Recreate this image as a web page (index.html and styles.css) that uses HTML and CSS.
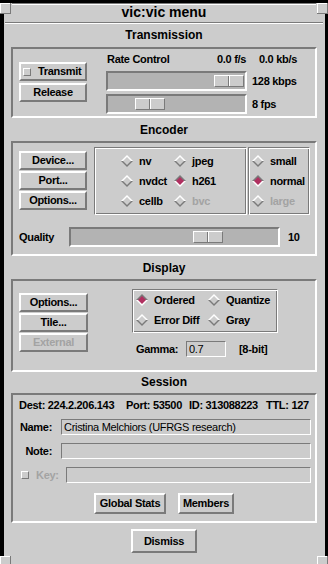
FILE: index.html
```html
<!DOCTYPE html>
<html lang="en">
<head>
    <meta charset="UTF-8">
    <meta name="viewport" content="width=device-width, initial-scale=1.0">
    <title>vic:vic menu</title>
    <link rel="stylesheet" href="styles.css">
</head>
<body>
    <div class="window">
        <!-- window manager corner handles -->
        <span class="corner corner-tl"></span>
        <span class="corner corner-tr"></span>
        <span class="corner corner-bl"></span>
        <span class="corner corner-br"></span>

        <div class="titlebar">vic:vic menu</div>
        <div class="separator"></div>

        <div class="panel">
            <!-- Transmission -->
            <div class="sect-title first">Transmission</div>
            <div class="frame trans-frame">
                <div class="btn-col trans-btns">
                    <button class="btn check-btn"><span class="check"></span>Transmit</button>
                    <button class="btn">Release</button>
                </div>
                <div class="rate">
                    <div class="rate-head">
                        <span class="rate-label">Rate Control</span>
                        <span class="rate-fps">0.0 f/s</span>
                        <span>0.0 kb/s</span>
                    </div>
                    <div class="scale-row">
                        <div class="scale rate-scale"><div class="thumb" style="margin-left: 106px"></div></div>
                        <span class="scale-value">128 kbps</span>
                    </div>
                    <div class="scale-row">
                        <div class="scale rate-scale"><div class="thumb" style="margin-left: 27px"></div></div>
                        <span class="scale-value">8 fps</span>
                    </div>
                </div>
            </div>

            <!-- Encoder -->
            <div class="sect-title">Encoder</div>
            <div class="frame enc-frame">
                <div class="enc-top">
                    <div class="btn-col enc-btns">
                        <button class="btn">Device...</button>
                        <button class="btn">Port...</button>
                        <button class="btn">Options...</button>
                    </div>
                    <div class="radio-box codec-box">
                        <label class="radio"><svg class="diamond" viewBox="0 0 12 12"><polygon class="d-top" points="0,6 6,0 12,6"/><polygon class="d-bot" points="0,6 12,6 6,12"/><polygon class="d-in" points="2,6 6,2 10,6 6,10"/></svg>nv</label>
                        <label class="radio"><svg class="diamond" viewBox="0 0 12 12"><polygon class="d-top" points="0,6 6,0 12,6"/><polygon class="d-bot" points="0,6 12,6 6,12"/><polygon class="d-in" points="2,6 6,2 10,6 6,10"/></svg>jpeg</label>
                        <label class="radio"><svg class="diamond" viewBox="0 0 12 12"><polygon class="d-top" points="0,6 6,0 12,6"/><polygon class="d-bot" points="0,6 12,6 6,12"/><polygon class="d-in" points="2,6 6,2 10,6 6,10"/></svg>nvdct</label>
                        <label class="radio on"><svg class="diamond" viewBox="0 0 12 12"><polygon class="d-top" points="0,6 6,0 12,6"/><polygon class="d-bot" points="0,6 12,6 6,12"/><polygon class="d-in" points="2,6 6,2 10,6 6,10"/></svg>h261</label>
                        <label class="radio"><svg class="diamond" viewBox="0 0 12 12"><polygon class="d-top" points="0,6 6,0 12,6"/><polygon class="d-bot" points="0,6 12,6 6,12"/><polygon class="d-in" points="2,6 6,2 10,6 6,10"/></svg>cellb</label>
                        <label class="radio disabled"><svg class="diamond" viewBox="0 0 12 12"><polygon class="d-top" points="0,6 6,0 12,6"/><polygon class="d-bot" points="0,6 12,6 6,12"/><polygon class="d-in" points="2,6 6,2 10,6 6,10"/></svg>bvc</label>
                    </div>
                    <div class="radio-box size-box">
                        <label class="radio"><svg class="diamond" viewBox="0 0 12 12"><polygon class="d-top" points="0,6 6,0 12,6"/><polygon class="d-bot" points="0,6 12,6 6,12"/><polygon class="d-in" points="2,6 6,2 10,6 6,10"/></svg>small</label>
                        <label class="radio on"><svg class="diamond" viewBox="0 0 12 12"><polygon class="d-top" points="0,6 6,0 12,6"/><polygon class="d-bot" points="0,6 12,6 6,12"/><polygon class="d-in" points="2,6 6,2 10,6 6,10"/></svg>normal</label>
                        <label class="radio disabled"><svg class="diamond" viewBox="0 0 12 12"><polygon class="d-top" points="0,6 6,0 12,6"/><polygon class="d-bot" points="0,6 12,6 6,12"/><polygon class="d-in" points="2,6 6,2 10,6 6,10"/></svg>large</label>
                    </div>
                </div>
                <div class="quality-row">
                    <span class="quality-label">Quality</span>
                    <div class="scale quality-scale"><div class="thumb" style="margin-left: 122px"></div></div>
                    <span class="quality-value">10</span>
                </div>
            </div>

            <!-- Display -->
            <div class="sect-title">Display</div>
            <div class="frame disp-frame">
                <div class="btn-col disp-btns">
                    <button class="btn">Options...</button>
                    <button class="btn">Tile...</button>
                    <button class="btn disabled">External</button>
                </div>
                <div class="disp-right">
                    <div class="radio-box dither-box">
                        <label class="radio on"><svg class="diamond" viewBox="0 0 12 12"><polygon class="d-top" points="0,6 6,0 12,6"/><polygon class="d-bot" points="0,6 12,6 6,12"/><polygon class="d-in" points="2,6 6,2 10,6 6,10"/></svg>Ordered</label>
                        <label class="radio"><svg class="diamond" viewBox="0 0 12 12"><polygon class="d-top" points="0,6 6,0 12,6"/><polygon class="d-bot" points="0,6 12,6 6,12"/><polygon class="d-in" points="2,6 6,2 10,6 6,10"/></svg>Quantize</label>
                        <label class="radio"><svg class="diamond" viewBox="0 0 12 12"><polygon class="d-top" points="0,6 6,0 12,6"/><polygon class="d-bot" points="0,6 12,6 6,12"/><polygon class="d-in" points="2,6 6,2 10,6 6,10"/></svg>Error Diff</label>
                        <label class="radio"><svg class="diamond" viewBox="0 0 12 12"><polygon class="d-top" points="0,6 6,0 12,6"/><polygon class="d-bot" points="0,6 12,6 6,12"/><polygon class="d-in" points="2,6 6,2 10,6 6,10"/></svg>Gray</label>
                    </div>
                    <div class="gamma-row">
                        <span class="gamma-label">Gamma:</span>
                        <input class="entry gamma-entry" type="text" value="0.7">
                        <span class="bit-depth">[8-bit]</span>
                    </div>
                </div>
            </div>

            <!-- Session -->
            <div class="sect-title session">Session</div>
            <div class="frame sess-frame">
                <div class="dest">
                    <span class="dest-addr">Dest: 224.2.206.143</span>
                    <span class="dest-port">Port: 53500</span>
                    <span class="dest-id">ID: 313088223</span>
                    <span>TTL: 127</span>
                </div>
                <div class="field first-field">
                    <span class="field-label">Name:</span>
                    <input class="entry wide-entry" type="text" value="Cristina Melchiors (UFRGS research)">
                </div>
                <div class="field">
                    <span class="field-label">Note:</span>
                    <input class="entry wide-entry" type="text" value="">
                </div>
                <div class="field key-row">
                    <span class="check"></span>
                    <span class="key-label">Key:</span>
                    <input class="entry key-entry" type="text" value="">
                </div>
                <div class="sess-btns">
                    <button class="btn stats-btn">Global Stats</button>
                    <button class="btn members-btn">Members</button>
                </div>
            </div>

            <div class="dismiss-row">
                <button class="btn dismiss-btn">Dismiss</button>
            </div>
        </div>
    </div>
</body>
</html>
```

FILE: styles.css
```css
* {
    box-sizing: border-box;
}

body {
    margin: 0;
    background: #000;
    font-family: "Liberation Sans", Arial, sans-serif;
    font-size: 11px;
    font-weight: bold;
    letter-spacing: -0.3px;
    line-height: 13px;
    color: #000;
}

/* Window with thin black frame on left, right and bottom */
.window {
    position: relative;
    width: 328px;
    height: 564px;
    background: #ccc;
    border-left: 4px solid #000;
    border-right: 3px solid #000;
    border-bottom: 3px solid #000;
}

.corner {
    position: absolute;
    width: 11px;
    height: 11px;
    background: #ccc;
    border-right: 1px solid #7a7a7a;
    border-bottom: 1px solid #7a7a7a;
    box-shadow: inset 1px 1px #fff;
}
.corner-tl { left: -4px; top: 0; }
.corner-tr { right: -3px; top: 0; }
.corner-bl { left: -4px; bottom: -3px; }
.corner-br { right: -3px; bottom: -3px; }

.titlebar {
    height: 19px;
    margin: 3px 9px 0 8px;
    padding-top: 1px;
    border-top: 1px solid #7a7a7a;
    box-shadow: inset 0 1px #fff;
    text-align: center;
    font-size: 14px;
    line-height: 14px;
    letter-spacing: 0;
}

.separator {
    height: 2px;
    margin: 0 2px 0 1px;
    border-top: 1px solid #7a7a7a;
    border-bottom: 1px solid #fff;
}

.panel {
    padding: 0 8px 0 7px;
}

.sect-title {
    text-align: center;
    font-size: 12px;
    line-height: 14px;
    letter-spacing: 0;
    margin: 5px 0 4px;
}
.sect-title.first { margin: 4px 0 5px; }
.sect-title.session { margin-top: 3px; }

/* sunken frames around each group */
.frame {
    border: 2px solid;
    border-color: #7a7a7a #fff #fff #7a7a7a;
}

.trans-frame { display: flex; height: 71px; }
.enc-frame { height: 115px; }
.disp-frame { display: flex; height: 93px; }
.sess-frame { height: 130px; }

/* Tk style buttons */
.btn {
    display: flex;
    align-items: center;
    justify-content: center;
    height: 19px;
    padding: 0;
    font: inherit;
    letter-spacing: inherit;
    color: #000;
    background: #ccc;
    border: 2px solid;
    border-color: #fff #7a7a7a #7a7a7a #fff;
    border-radius: 0;
}
.btn.disabled { color: #a3a3a3; }

.btn-col {
    display: flex;
    flex-direction: column;
    gap: 1px;
    width: 68px;
    margin-left: 6px;
}
.trans-btns { margin-top: 13px; gap: 2px; }
.enc-btns { margin-top: 8px; }
.disp-btns { margin-top: 12px; width: 69px; }

.check-btn {
    justify-content: flex-start;
    padding-left: 2px;
    gap: 7px;
}

.check {
    width: 8px;
    height: 8px;
    background: #ccc;
    border: 1px solid;
    border-color: #fff #7a7a7a #7a7a7a #fff;
}

/* Rate control */
.rate {
    margin-left: 19px;
    padding-top: 4px;
}
.rate-head { display: flex; }
.rate-label { width: 110px; margin-left: 1px; }
.rate-fps { width: 42px; }

.scale-row {
    display: flex;
    align-items: center;
    margin-top: 5px;
}
.scale-row + .scale-row { margin-top: 3px; }
.scale-value { margin-left: 5px; }

.scale {
    height: 20px;
    padding-top: 2px;
    background: #b3b3b3;
    border: 2px solid;
    border-color: #7a7a7a #fff #fff #7a7a7a;
}
.rate-scale { width: 141px; }

.thumb {
    width: 30px;
    height: 12px;
    border: 1px solid;
    border-color: #fff #7a7a7a #7a7a7a #fff;
    background: linear-gradient(to right, #ccc 13px, #7a7a7a 13px 14px, #fff 14px 15px, #ccc 15px);
}

/* Encoder */
.enc-top { display: flex; }

.radio-box {
    display: grid;
    grid-auto-rows: 20px;
    align-content: start;
    height: 68px;
    margin-top: 4px;
    border: 1px solid;
    border-color: #7a7a7a #fff #fff #7a7a7a;
    box-shadow: inset 1px 1px #fff, inset -1px -1px #7a7a7a;
}
.codec-box {
    width: 153px;
    margin-left: 7px;
    padding: 3px 0 0 26px;
    grid-template-columns: 53px auto;
}
.size-box {
    width: 62px;
    margin-left: 1px;
    padding: 3px 0 0 3px;
}

.radio {
    display: flex;
    align-items: center;
    gap: 6px;
}
.radio.disabled { color: #a3a3a3; }

.diamond {
    width: 12px;
    height: 12px;
    flex: none;
}
.d-top { fill: #fff; }
.d-bot { fill: #7a7a7a; }
.d-in { fill: #ccc; }
.radio.on .d-top { fill: #7a7a7a; }
.radio.on .d-bot { fill: #fff; }
.radio.on .d-in { fill: #b03060; }

.quality-row {
    display: flex;
    align-items: center;
    margin: 12px 0 0 6px;
}
.quality-label { width: 50px; }
.quality-scale { width: 211px; }
.quality-value { margin-left: 8px; }

/* Display */
.disp-right { margin: 8px 0 0 44px; }

.dither-box {
    width: 146px;
    height: 44px;
    margin-top: 0;
    padding-left: 3px;
    grid-template-columns: 72px auto;
}

.gamma-row {
    display: flex;
    align-items: center;
    margin-top: 8px;
    padding-left: 4px;
}
.gamma-label { width: 50px; }
.gamma-entry { width: 40px; padding-left: 1px; }
.bit-depth { margin-left: 13px; }

/* entries */
.entry {
    height: 16px;
    padding: 0 2px;
    font: inherit;
    font-weight: normal;
    letter-spacing: -0.3px;
    color: #000;
    background: #ccc;
    border: 1px solid;
    border-color: #7a7a7a #fff #fff #7a7a7a;
    outline: none;
}

/* Session */
.dest {
    display: flex;
    margin: 4px 0 0 6px;
}
.dest-addr { width: 107px; }
.dest-port { width: 63px; }
.dest-id { width: 77px; }

.field {
    display: flex;
    align-items: center;
    margin: 8px 0 0 6px;
}
.field.first-field { margin-top: 7px; }
.field-label {
    width: 33px;
    margin-right: 9px;
    text-align: right;
}
.wide-entry { width: 250px; }

.key-row {
    padding-left: 2px;
    gap: 7px;
}
.key-label { color: #a3a3a3; }
.key-entry { width: 245px; }

.sess-btns {
    display: flex;
    justify-content: center;
    gap: 12px;
    margin-top: 10px;
}
.stats-btn { width: 72px; height: 21px; }
.members-btn { width: 56px; height: 21px; }

.dismiss-row {
    display: flex;
    justify-content: center;
    margin-top: 6px;
}
.dismiss-btn { width: 66px; height: 24px; }
```
